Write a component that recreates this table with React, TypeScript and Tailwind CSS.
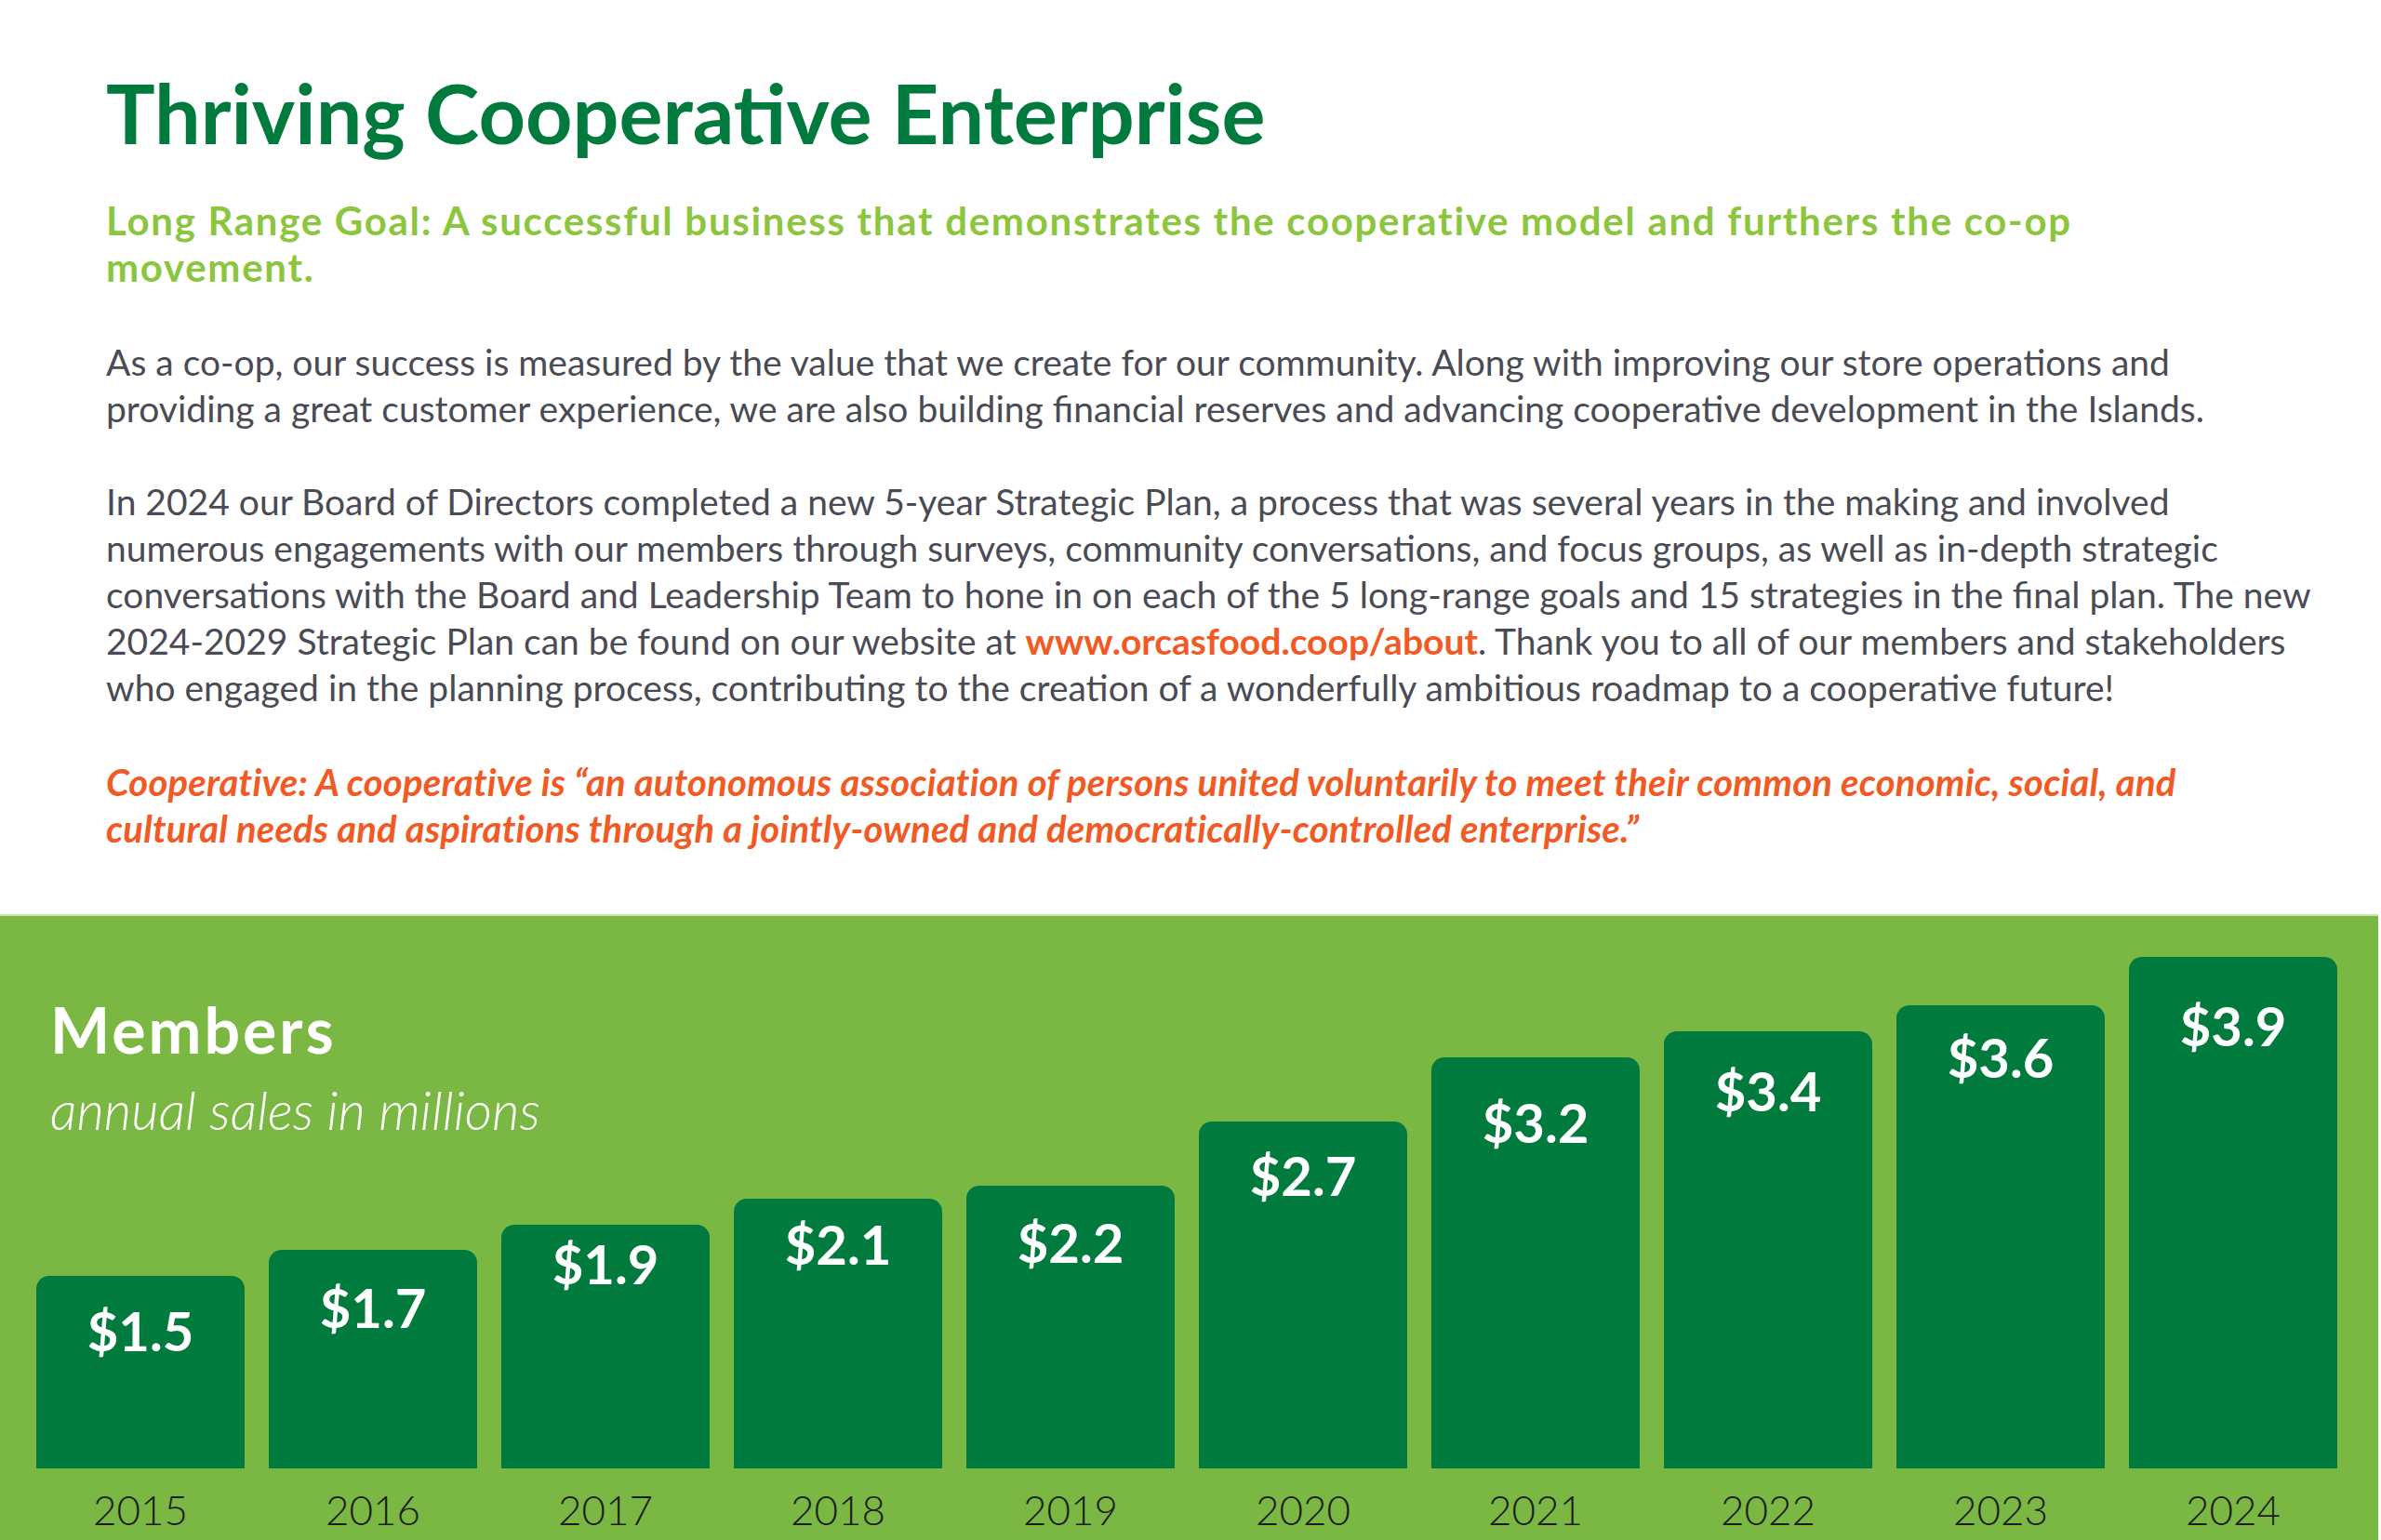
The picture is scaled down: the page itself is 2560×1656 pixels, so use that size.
import React from "react";

const bars = [
  { year: "2015", value: "$1.5", height: 207, labelTop: 30 },
  { year: "2016", value: "$1.7", height: 235, labelTop: 33 },
  { year: "2017", value: "$1.9", height: 262, labelTop: 13 },
  { year: "2018", value: "$2.1", height: 290, labelTop: 20 },
  { year: "2019", value: "$2.2", height: 304, labelTop: 32 },
  { year: "2020", value: "$2.7", height: 373, labelTop: 29 },
  { year: "2021", value: "$3.2", height: 442, labelTop: 41 },
  { year: "2022", value: "$3.4", height: 470, labelTop: 35 },
  { year: "2023", value: "$3.6", height: 498, labelTop: 27 },
  { year: "2024", value: "$3.9", height: 550, labelTop: 45 },
];

function Bar({
  year,
  value,
  height,
  labelTop,
}: {
  year: string;
  value: string;
  height: number;
  labelTop: number;
}) {
  return (
    <div className="flex w-[224px] flex-col items-center">
      <div
        className="flex w-full flex-col items-center rounded-t-[14px] bg-[#007a3d]"
        style={{ height, paddingTop: labelTop }}
      >
        <span className="text-[58px] leading-[58px] font-bold text-white">
          {value}
        </span>
      </div>
      <span className="mt-[22px] text-[44px] leading-[44px] font-light text-[#1c1c1c]">
        {year}
      </span>
    </div>
  );
}

export default function App() {
  return (
    <div className="min-h-[1656px] w-[2560px] bg-white font-['Lato','Liberation_Sans',sans-serif]">
      <div className="px-[114px] pt-[71px]">
        <h1 className="text-[88px] leading-[100px] font-bold text-[#007a3d]">
          Thriving Cooperative Enterprise
        </h1>

        <p className="mt-[41px] text-[42px] leading-[50px] font-bold tracking-[1.7px] text-[#8cc63f]">
          <span className="block whitespace-nowrap">
            Long Range Goal: A successful business that demonstrates the
            cooperative model and furthers the co-op
          </span>
          <span className="block whitespace-nowrap">movement.</span>
        </p>

        <p className="mt-[52px] text-[39px] leading-[50px] text-[#4a4b55]">
          <span className="block whitespace-nowrap">
            As a co-op, our success is measured by the value that we create for
            our community. Along with improving our store operations and
          </span>
          <span className="block whitespace-nowrap">
            providing a great customer experience, we are also building
            financial reserves and advancing cooperative development in the
            Islands.
          </span>
        </p>

        <p className="mt-[50px] text-[39px] leading-[50px] text-[#4a4b55]">
          <span className="block whitespace-nowrap">
            In 2024 our Board of Directors completed a new 5-year Strategic
            Plan, a process that was several years in the making and involved
          </span>
          <span className="block whitespace-nowrap">
            numerous engagements with our members through surveys, community
            conversations, and focus groups, as well as in-depth strategic
          </span>
          <span className="block whitespace-nowrap">
            conversations with the Board and Leadership Team to hone in on each
            of the 5 long-range goals and 15 strategies in the final plan. The
            new
          </span>
          <span className="block whitespace-nowrap">
            2024-2029 Strategic Plan can be found on our website at{" "}
            <a className="font-bold text-[#f15a24]">www.orcasfood.coop/about</a>
            . Thank you to all of our members and stakeholders
          </span>
          <span className="block whitespace-nowrap">
            who engaged in the planning process, contributing to the creation
            of a wonderfully ambitious roadmap to a cooperative future!
          </span>
        </p>

        <p className="mt-[52px] text-[40px] leading-[50px] font-bold italic tracking-[0.2px] text-[#f15a24]">
          <span className="block whitespace-nowrap">
            Cooperative: A cooperative is “an autonomous association of persons
            united voluntarily to meet their common economic, social, and
          </span>
          <span className="block whitespace-nowrap">
            cultural needs and aspirations through a jointly-owned and
            democratically-controlled enterprise.”
          </span>
        </p>
      </div>

      <section className="mt-[67px] grid h-[673px] w-[2557px] border-t-2 border-[#cfe3b8] bg-[#7ab843]">
        <div className="col-start-1 row-start-1 self-start pl-[54px] pt-[82px] text-white">
          <h2 className="text-[68px] leading-[80px] font-bold tracking-[3px]">
            Members
          </h2>
          <p className="mt-[14px] text-[57px] leading-[64px] font-light italic">
            annual sales in millions
          </p>
        </div>
        <div className="col-start-1 row-start-1 flex items-end gap-[26px] self-end pb-[11px] pl-[39px]">
          {bars.map((b) => (
            <Bar key={b.year} {...b} />
          ))}
        </div>
      </section>
    </div>
  );
}
